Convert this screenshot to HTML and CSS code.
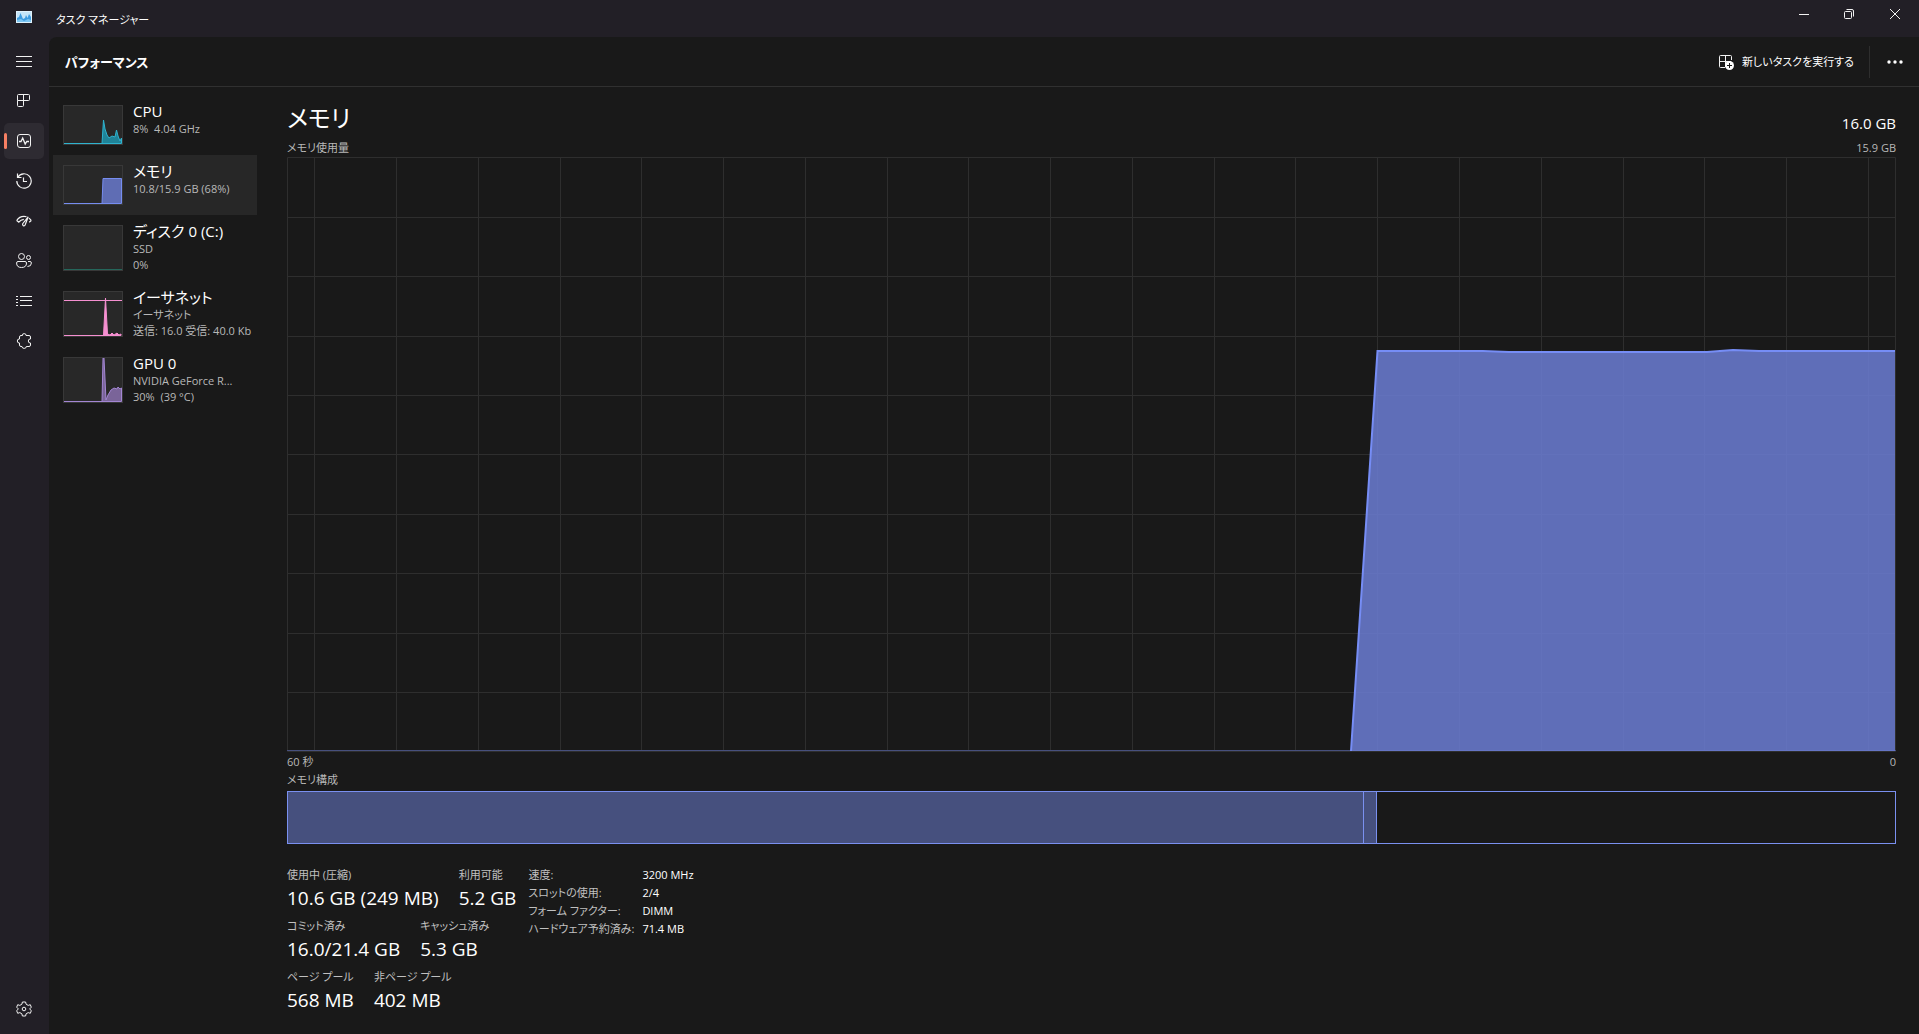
FILE: index.html
```html
<!DOCTYPE html>
<html lang="ja">
<head>
<meta charset="utf-8">
<title>タスク マネージャー</title>
<link rel="stylesheet" href="styles.css">
</head>
<body>
<div class="window">
  <header class="titlebar">
    <svg class="app-icon" viewBox="0 0 16 12" width="16" height="12" aria-hidden="true">
      <rect width="16" height="12" fill="#dff1fb"/>
      <rect x="1" y="1" width="14" height="10" fill="#c3e4f8"/>
      <path d="M1 11V7L3 6L4.500 2L7 8L9 7L10 4L11.500 7L13 3L15 6V11Z" fill="#3c9be0"/>
      <path d="M1 11V9L5 8L8 10L12 8L15 9V11Z" fill="#7cc6f2"/>
    </svg>
    <h1 class="app-title">タスク マネージャー</h1>
    <div class="window-buttons">
      <button type="button" aria-label="最小化"><svg viewBox="0 0 12 12" width="12" height="12"><path d="M1 6.500H11"/></svg></button>
      <button type="button" aria-label="元に戻す"><svg viewBox="0 0 12 12" width="12" height="12"><rect x="1.500" y="3.500" width="7" height="7" rx="1"/><path d="M3.500 1.500H9Q10.500 1.500 10.500 3V8.500"/></svg></button>
      <button type="button" aria-label="閉じる"><svg viewBox="0 0 12 12" width="12" height="12"><path d="M1 1L11 11M11 1L1 11"/></svg></button>
    </div>
  </header>

  <div class="body">
    <nav class="rail" aria-label="ナビゲーション">
      <button type="button" class="rail-button" aria-label="メニュー"><svg viewBox="0 0 16 16" width="16" height="16"><path d="M0 3.500H16M0 8.500H16M0 13.500H16"/></svg></button>
      <button type="button" class="rail-button" aria-label="プロセス"><svg viewBox="0 0 16 16" width="16" height="16"><path d="M2.500 1.500H12.500Q13.500 1.500 13.500 2.500V6.500Q13.500 7.500 12.500 7.500H1.500V2.500Q1.500 1.500 2.500 1.500ZM1.500 7.500V12.500Q1.500 13.500 2.500 13.500H6.500Q7.500 13.500 7.500 12.500V1.500"/></svg></button>
      <button type="button" class="rail-button current" aria-label="パフォーマンス" aria-current="page"><svg viewBox="0 0 16 16" width="16" height="16"><rect x="1.500" y="1.500" width="13" height="13" rx="2.500"/><path d="M3 8.500H5L6.700 5L9.200 11L10.800 8.500H13" stroke-width="1.300"/></svg></button>
      <button type="button" class="rail-button" aria-label="アプリの履歴"><svg viewBox="0 0 16 16" width="16" height="16"><path d="M1.500 0.500V4.500H5.500M1.800 4.300A7.200 7.200 0 1 1 0.800 8M7.500 4.500V8.500H11" stroke-width="1.200"/></svg></button>
      <button type="button" class="rail-button" aria-label="スタートアップ アプリ"><svg viewBox="0 0 16 16" width="16" height="16"><path d="M0.700 7.500Q3.300 3.300 8 3.300Q9.500 3.300 10.500 3.800M13 5.200Q14.500 6.300 15.300 7.500M0.700 7.500L2.800 9.200Q4.800 6.500 7.800 6.300M13.200 9.200L15.300 7.500M12.200 3.800L9.200 11.800Q8.500 13.300 7.300 12.700Q6.200 12 6.700 10.700Z" stroke-width="1.200"/></svg></button>
      <button type="button" class="rail-button" aria-label="ユーザー"><svg viewBox="0 0 16 16" width="16" height="16"><circle cx="5.500" cy="3.500" r="3"/><circle cx="12.500" cy="4.500" r="2"/><path d="M2 8.500H9Q10.500 8.500 10.500 10Q10.500 14.500 5.500 14.500Q0.600 14.500 0.600 10Q0.600 8.500 2 8.500ZM12 8.500H14Q15.400 8.500 15.400 10Q15.400 13.500 11.500 13.500"/></svg></button>
      <button type="button" class="rail-button" aria-label="詳細"><svg viewBox="0 0 16 16" width="16" height="16"><path d="M4 3.500H16M4 7.500H16M4 12.500H16M0 3.500H2M0 6.500H2M0 9.500H2M0 12.500H2"/></svg></button>
      <button type="button" class="rail-button" aria-label="サービス"><svg viewBox="0 0 16 16" width="16" height="16"><path d="M3.500 6V4Q3.500 2.500 5 2.500H6.500Q6 0.600 8.200 0.600Q10.300 0.600 10 2.500H13Q14.500 2.500 14.500 4V6Q12.300 5.800 12.300 8Q12.300 10.200 14.500 10V12Q14.500 13.500 13 13.500H10.300Q10.300 15.400 8.200 15.400Q6 15.400 6 13.500H5Q3.500 13.500 3.500 12V10Q1.300 10.200 1.300 8Q1.300 5.800 3.500 6Z"/></svg></button>
      <button type="button" class="rail-button settings" aria-label="設定"><svg viewBox="0 0 16 16" width="16" height="16"><path d="M6.400 1H9.600L10.100 3.200L12.200 4.400L14.300 3.700L15.300 6.200L13.700 7.900L15.300 9.800L14.300 12.300L12.200 11.600L10.100 12.800L9.600 15H6.400L5.900 12.800L3.800 11.600L1.700 12.300L0.700 9.800L2.300 7.900L0.700 6.200L1.700 3.700L3.800 4.400L5.900 3.200Z" stroke-linejoin="round"/><circle cx="8" cy="8" r="1.800"/></svg></button>
    </nav>

    <main class="page">
      <div class="toolbar">
        <h2>パフォーマンス</h2>
        <button type="button" class="run-task">
          <svg viewBox="0 0 16 16" width="16" height="16" aria-hidden="true"><path d="M7 13.500H2.500Q1.500 13.500 1.500 12.500V2.500Q1.500 1.500 2.500 1.500H12.500Q13.500 1.500 13.500 2.500V6M1.500 7.500H13M7.500 1.500V13"/><circle cx="11.500" cy="11.500" r="4.500" class="plus-disc"/><path d="M9 11.500H14M11.500 9V14" class="plus-sign"/></svg>
          <span>新しいタスクを実行する</span>
        </button>
        <button type="button" class="more" aria-label="その他"><svg viewBox="0 0 16 4" width="16" height="4"><circle cx="2" cy="2" r="1.700"/><circle cx="8" cy="2" r="1.700"/><circle cx="14" cy="2" r="1.700"/></svg></button>
      </div>

      <div class="content">
        <div class="devices">
          <button type="button" class="device">
            <svg class="thumb cpu" viewBox="0 0 60 40" width="60" height="40" aria-hidden="true"><path d="M1 38.500H39L40.500 15L42 24L44 30L46 33L49 31L52 32L53.500 25L55 31L57 36L58.500 33V38.500Z"/></svg>
            <span class="info"><strong>CPU</strong><span>8%&nbsp; 4.04 GHz</span></span>
          </button>
          <button type="button" class="device selected">
            <svg class="thumb memory" viewBox="0 0 60 40" width="60" height="40" aria-hidden="true"><path d="M1 38.500H39L40 13.500H58.500V38.500Z"/></svg>
            <span class="info"><strong>メモリ</strong><span>10.8/15.9 GB (68%)</span></span>
          </button>
          <button type="button" class="device">
            <svg class="thumb disk" viewBox="0 0 60 46" width="60" height="46" aria-hidden="true"><path d="M1 44.500H59"/></svg>
            <span class="info"><strong>ディスク 0 (C:)</strong><span>SSD</span><span>0%</span></span>
          </button>
          <button type="button" class="device">
            <svg class="thumb ethernet" viewBox="0 0 60 46" width="60" height="46" aria-hidden="true"><path d="M1 9.500H59M1 44.500H40.500L42.500 7L44.500 43L47 44L49 42L51 44L54 42L56 44L58 43V44.500Z"/></svg>
            <span class="info"><strong>イーサネット</strong><span>イーサネット</span><span>送信: 16.0 受信: 40.0 Kb</span></span>
          </button>
          <button type="button" class="device">
            <svg class="thumb gpu" viewBox="0 0 60 46" width="60" height="46" aria-hidden="true"><path d="M1 44.500H39L40 1H41L43 43L45 38L48 33L51 31L54 32L55 30L57 32L58.500 31V44.500Z"/></svg>
            <span class="info"><strong>GPU 0</strong><span>NVIDIA GeForce R...</span><span>30%&nbsp; (39 °C)</span></span>
          </button>
        </div>

        <section class="detail">
          <div class="heading"><h3>メモリ</h3><span class="capacity">16.0 GB</span></div>
          <div class="caption"><span>メモリ使用量</span><span>15.9 GB</span></div>
          <svg class="chart" viewBox="0 0 1609 595" preserveAspectRatio="none" role="img" aria-label="メモリ使用量">
            <path class="grid" d="M0 60.500H1609M0 119.500H1609M0 179.500H1609M0 238.500H1609M0 297.500H1609M0 357.500H1609M0 416.500H1609M0 476.500H1609M0 535.500H1609"/>
            <path class="grid" d="M27.500 0V595M109.500 0V595M191.500 0V595M273.500 0V595M354.500 0V595M436.500 0V595M518.500 0V595M600.500 0V595M681.500 0V595M763.500 0V595M845.500 0V595M927.500 0V595M1008.500 0V595M1090.500 0V595M1172.500 0V595M1254.500 0V595M1336.500 0V595M1417.500 0V595M1499.500 0V595M1581.500 0V595"/>
            <rect class="grid" x="0.500" y="0.500" width="1608" height="594"/>
            <path class="base" d="M0 593.500H1609"/>
            <path class="area" d="M1064 594L1090.500 194H1196L1222 195H1420L1446 193L1472 194H1608V594Z"/>
            <path class="line" d="M1064 594L1090.500 194H1196L1222 195H1420L1446 193L1472 194H1608"/>
          </svg>
          <div class="caption axis"><span>60 秒</span><span>0</span></div>
          <div class="caption composition-title"><span>メモリ構成</span></div>
          <div class="composition"><div class="in-use" style="width: 66.9%"></div><div class="modified"></div><div class="free"></div></div>

          <div class="stats">
            <div class="figures">
              <dl><div><dt>使用中 (圧縮)</dt><dd>10.6 GB (249 MB)</dd></div><div><dt>利用可能</dt><dd>5.2 GB</dd></div></dl>
              <dl><div><dt>コミット済み</dt><dd>16.0/21.4 GB</dd></div><div><dt>キャッシュ済み</dt><dd>5.3 GB</dd></div></dl>
              <dl><div><dt>ページ プール</dt><dd>568 MB</dd></div><div><dt>非ページ プール</dt><dd>402 MB</dd></div></dl>
            </div>
            <table class="specs">
              <tr><th scope="row">速度:</th><td>3200 MHz</td></tr>
              <tr><th scope="row">スロットの使用:</th><td>2/4</td></tr>
              <tr><th scope="row">フォーム ファクター:</th><td>DIMM</td></tr>
              <tr><th scope="row">ハードウェア予約済み:</th><td>71.4 MB</td></tr>
            </table>
          </div>
        </section>
      </div>
    </main>
  </div>
</div>
</body>
</html>
```
FILE: styles.css
```css
* { box-sizing: border-box; }

body {
  margin: 0;
  background: #221f26;
  color: #fff;
  font: 11px/16px "Open Sans", "Noto Sans CJK JP", sans-serif;
  font-feature-settings: "palt", "kern";
}

button {
  padding: 0;
  border: 0;
  background: none;
  color: inherit;
  font: inherit;
  font-feature-settings: inherit;
}

h1, h2, h3, dl, dd { margin: 0; font-weight: 400; }

svg { display: block; flex: none; fill: none; stroke: #f2f2f2; stroke-width: 1; }

.window {
  display: flex;
  flex-direction: column;
  min-height: 100vh;
  border-bottom: 2px solid #46304f;
}

/* Title bar */
.titlebar { display: flex; height: 37px; padding-left: 16px; }
.app-icon { margin-top: 11px; stroke: none; }
.app-title { margin-left: 24px; padding-top: 12px; font-size: 11px; line-height: 16px; }
.window-buttons { display: flex; height: 28px; margin-left: auto; }
.window-buttons button { display: grid; place-items: center; width: 45px; }
.window-buttons button:last-child { width: 48px; }

.body { display: flex; flex: 1; }

/* Navigation rail */
.rail { display: flex; flex-direction: column; gap: 4px; width: 49px; flex: none; padding: 6px 4px 9px; }
.rail-button { position: relative; display: grid; place-items: center; width: 40px; height: 36px; border-radius: 5px; }
.rail-button.current { background: #2e2b32; }
.rail-button.current::before {
  content: "";
  position: absolute;
  left: 0;
  top: 10px;
  width: 3px;
  height: 16px;
  border-radius: 2px;
  background: #f67f63;
}
.settings { margin-top: auto; }

/* Page */
.page { display: flex; flex-direction: column; flex: 1; min-width: 0; background: #191919; border-top-left-radius: 8px; }
.toolbar { display: flex; align-items: center; height: 50px; padding: 1px 0 0 16px; border-bottom: 1px solid #303030; }
.toolbar h2 { font-size: 13px; font-weight: 700; line-height: 20px; }
.run-task { display: flex; align-items: center; gap: 8px; height: 32px; margin-left: auto; padding-right: 15px; border-right: 1px solid #2e2e2e; }
.plus-disc { fill: #fff; stroke: none; }
.plus-sign { stroke: #191919; }
.more { display: grid; place-items: center; width: 49px; height: 32px; }
.more svg { fill: #fff; stroke: none; }

.content { display: flex; flex: 1; }

/* Device list */
.devices { width: 209px; flex: none; padding: 8px 0 0 4px; }
.device { display: flex; gap: 10px; width: 204px; padding: 6px 0 4px 10px; text-align: left; white-space: nowrap; }
.device.selected { background: #272727; }
.info { display: flex; flex-direction: column; min-height: 50px; color: #b8b8b8; line-height: 16px; }
.info strong { color: #fff; font-size: 15px; font-weight: 400; line-height: 20px; }
.info span:last-child { margin-bottom: 4px; }
.thumb { margin-top: 4px; outline: 1px solid #383838; outline-offset: -1px; background: #282828; }
.cpu { fill: #1f8398; stroke: #2fb3cf; }
.memory { fill: #5f6db4; stroke: #768df0; }
.disk { stroke: #25675b; }
.ethernet { fill: #f58fd0; stroke: #f58fd0; }
.gpu { fill: #7a6499; stroke: #a386d3; }

/* Memory detail */
.detail { display: flex; flex-direction: column; flex: 1; min-width: 0; padding: 11px 23px 22px 29px; }
.heading { display: flex; justify-content: space-between; height: 41px; }
.heading h3 { font-size: 24px; line-height: 40px; }
.capacity { padding-top: 15px; font-size: 15px; line-height: 20px; }
.caption { display: flex; justify-content: space-between; color: #b8b8b8; line-height: 18px; }
.chart { width: 100%; height: 0; min-height: 240px; flex: 1; }
.chart path, .chart rect { vector-effect: non-scaling-stroke; }
.grid { stroke: #2e2e2e; }
.base { stroke: #47507d; }
.area { fill: #6a7bd0; fill-opacity: .87; stroke: none; }
.line { stroke: #768df5; stroke-width: 2; }
.axis { padding-top: 1px; }
.composition-title { padding-bottom: 2px; }
.composition { display: flex; height: 53px; border: 1px solid #7a90f0; }
.in-use { background: #46507e; }
.modified { flex: 0 0 14px; border: solid #7a90f0; border-width: 0 1px; background: #46507e; }
.free { flex: 1; }

.stats { display: flex; gap: 12px; padding-top: 22px; }
.figures { display: flex; flex-direction: column; gap: 5px; }
.figures dl { display: flex; gap: 20px; }
.figures dt { color: #c0c0c0; line-height: 18px; }
.figures dd { font-size: 19px; line-height: 28px; }
.specs { align-self: flex-start; border-collapse: collapse; line-height: 18px; }
.specs th { width: 114px; padding: 0; color: #c0c0c0; font-weight: 400; text-align: left; white-space: nowrap; }
.specs td { padding: 0; white-space: nowrap; }
```
